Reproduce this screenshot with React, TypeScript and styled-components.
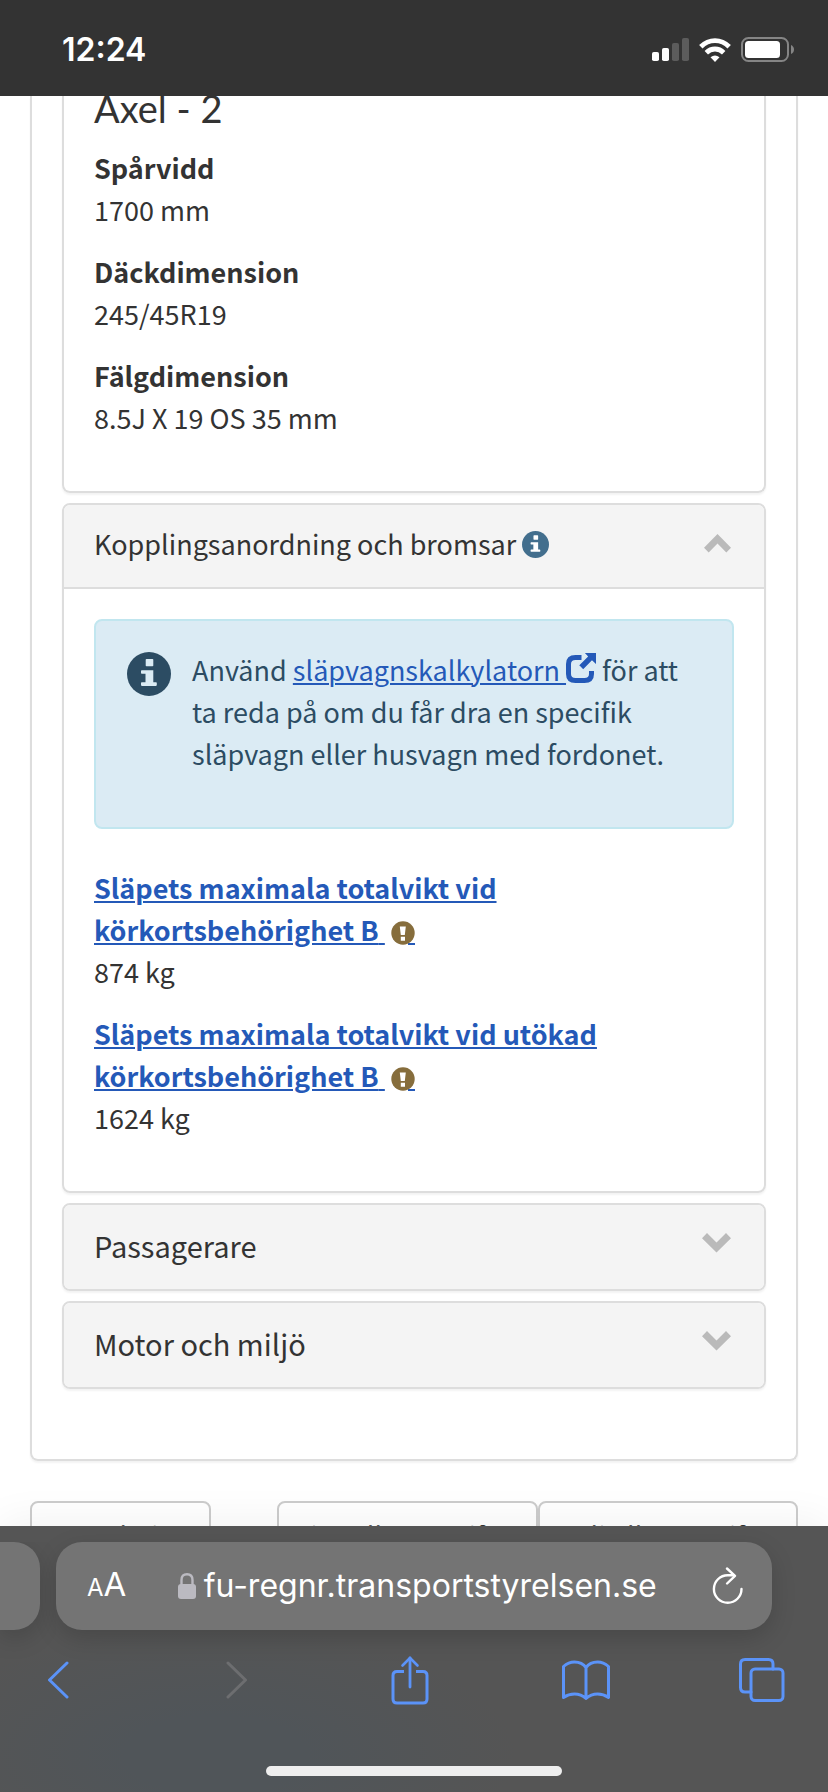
import React from "react";
import styled, { createGlobalStyle } from "styled-components";

const GlobalStyle = createGlobalStyle`
  * { box-sizing: border-box; }
  body { margin: 0; background: #fff; }
  button { font: inherit; color: inherit; background: none; border: 0; padding: 0; margin: 0; cursor: pointer; }
  h2, h3, p, dl, dt, dd { margin: 0; font-weight: inherit; font-size: inherit; }
  svg { display: block; flex: none; }
`;

const Screen = styled.div`
  display: grid;
  grid-template-rows: auto minmax(0, 1fr) auto;
  grid-template-columns: minmax(0, 1fr);
  height: 100vh;
  color: #333;
  font-family: "Noto Sans CJK SC", "Noto Sans", sans-serif;
  font-size: 27px;
  line-height: 42px;
`;

const StatusBar = styled.header`
  display: flex;
  align-items: center;
  justify-content: space-between;
  height: 96px;
  padding: 3px 34px 0 62px;
  background: #333;
  color: #fff;
  font-family: Inter, sans-serif;
`;

const Clock = styled.time`
  font-size: 32px;
  font-weight: 600;
`;

const StatusIcons = styled.div`
  display: flex;
  align-items: center;
  gap: 10px;
`;

const Page = styled.main`
  overflow: hidden;
  padding: 0 30px;
`;

const Sheet = styled.section`
  padding: 0 30px 60px;
  border: solid #ddd;
  border-width: 0 2px 2px;
  border-radius: 0 0 8px 8px;
  box-shadow: 0 2px 2px rgba(0, 0, 0, 0.05);
`;

const Panel = styled.section<{ $continued?: boolean }>`
  margin-bottom: 10px;
  border: 2px solid #ddd;
  border-top-width: ${(p) => (p.$continued ? 0 : 2)}px;
  border-radius: ${(p) => (p.$continued ? "0 0 8px 8px" : "8px")};
  box-shadow: 0 2px 2px rgba(0, 0, 0, 0.05);
  overflow: hidden;
`;

const PanelHeader = styled.button<{ $open?: boolean }>`
  && {
    display: flex;
    align-items: center;
    justify-content: space-between;
    width: 100%;
    height: ${(p) => (p.$open ? 82 : 84)}px;
    padding: 0 33px 0 30px;
    background: #f4f4f4;
    font-size: ${(p) => (p.$open ? 27 : 29)}px;
    text-align: left;
  }
`;

const PanelTitle = styled.span`
  display: flex;
  align-items: center;
  gap: 6px;
  padding-bottom: 4px;
`;

const PanelBody = styled.div<{ $ruled?: boolean }>`
  padding: ${(p) => (p.$ruled ? "30px 30px 52px" : "0 30px 52px")};
  border-top: ${(p) => (p.$ruled ? "2px solid #ddd" : "0")};
`;

const AxleHeading = styled.h2`
  && {
    margin-bottom: 27px;
    font-family: Lato, sans-serif;
    font-size: 38px;
    line-height: 24px;
  }
`;

const Facts = styled.dl`
  display: grid;
  gap: 20px;
`;

const Label = styled.dt`
  && { font-weight: 700; }
`;

const Value = styled.dd``;

const Link = styled.a`
  color: #2459b8;
  text-decoration: underline;
  text-decoration-thickness: 2px;
  text-underline-offset: 2px;
`;

const Notice = styled.aside`
  display: flex;
  gap: 21px;
  margin-bottom: 38px;
  padding: 28px 31px 52px;
  border: 2px solid #c1e6ef;
  border-radius: 8px;
  background: #dbebf4;
  color: #2c4c63;
`;

const NoticeIcon = styled.span`
  flex: none;
  margin-top: 3px;
`;

const ExternalMark = styled.span`
  display: inline-block;
  vertical-align: -2px;
`;

const WarningMark = styled.span`
  display: inline-block;
  margin-left: 6px;
  vertical-align: -4px;
`;

const Actions = styled.div`
  display: flex;
  margin-top: 40px;
`;

const ActionButton = styled.button<{ $grow?: boolean }>`
  && {
    flex: ${(p) => (p.$grow ? "1 1 0" : "0 0 181px")};
    min-width: 0;
    margin-right: ${(p) => (p.$grow ? 0 : 66)}px;
    padding: 12px 0;
    border: 2px solid #ccc;
    border-radius: 8px;
    white-space: nowrap;
  }
`;

const BrowserBar = styled.footer`
  position: relative;
  padding-top: 16px;
  background: radial-gradient(ellipse 300px 130px at 26% 86%, #505559 30%, #555 100%);
  color: #fff;
  font-family: Inter, sans-serif;
  box-shadow: 0 -4px 40px rgba(0, 0, 0, 0.06);
`;

const Tabs = styled.div`
  display: flex;
  gap: 16px;
  padding-right: 56px;
`;

const PreviousTab = styled.div`
  flex: 0 0 40px;
  border-radius: 0 26px 26px 0;
  background: #747474;
  box-shadow: 0 8px 24px rgba(0, 0, 0, 0.16);
  clip-path: inset(0 -16px -50px 0);
`;

const AddressBar = styled.div`
  display: flex;
  flex: 1;
  align-items: center;
  justify-content: space-between;
  height: 88px;
  padding: 0 29px 0 31px;
  border-radius: 26px;
  background: #747474;
  box-shadow: 0 8px 24px rgba(0, 0, 0, 0.16);
`;

const TextSize = styled.button`
  && { font-size: 33px; }
  small { font-size: 24px; }
`;

const Address = styled.div`
  display: flex;
  align-items: center;
  gap: 8px;
  padding-right: 4px;
  font-size: 32px;
`;

const Toolbar = styled.nav`
  display: flex;
  align-items: center;
  justify-content: space-between;
  height: 100px;
  padding: 0 42px 0 34px;
  color: #5b93f8;
`;

const ToolButton = styled.button<{ $muted?: boolean }>`
  && {
    display: flex;
    justify-content: center;
    width: 48px;
    color: ${(p) => (p.$muted ? "#6d6e70" : "inherit")};
  }
`;

const HomeIndicator = styled.div`
  width: 296px;
  height: 10px;
  margin: 36px auto 0;
  border-radius: 5px;
  background: #eee;
`;

const BarFoot = styled.div`
  height: 16px;
`;

const InfoIcon = ({ size, color, hole }: { size: number; color: string; hole: string }) => (
  <svg width={size} height={size} viewBox="0 0 44 44" aria-hidden="true">
    <circle cx="22" cy="22" r="22" fill={color} />
    <path fill={hole} d="M19.500 7h6q.8 0 .8.8v5.600q0 .8-.8.8h-6q-.8 0-.8-.8V7.800q0-.8.8-.8zM14.800 18.300h11.500v12h2.700q.8 0 .8.8v2q0 .8-.8.8H14.800q-.8 0-.8-.8v-2q0-.8.8-.8h3.700v-8.500h-3.700q-.8 0-.8-.8v-1.900q0-.8.8-.8z" />
  </svg>
);

const WarningIcon = () => (
  <svg width="24" height="24" viewBox="0 0 24 24" aria-label="Viktigt">
    <path fill="#2459b8" d="M17 22h7v2h-7z" />
    <circle cx="12" cy="12" r="11.700" fill="#866d3c" />
    <path fill="#fff" d="M8.800 5.500h6l-1 8.500h-4zM9.800 15.800h4.200v4H9.800z" />
  </svg>
);

const ExternalIcon = () => (
  <svg width="30" height="30" viewBox="0 0 30 30" aria-hidden="true">
    <path fill="none" stroke="#2459b8" strokeWidth="5" d="M15.500 4.500H9.500Q2.500 4.500 2.500 11v10q0 6.500 7 6.500h9q7 0 7-6.500v-3" />
    <path fill="#2459b8" stroke="#dbebf4" strokeWidth="1.500" d="M17 -1h14v14l-5-4.600-8.800 8.800-4.900-4.900L21.100 3.500z" />
  </svg>
);

const Chevron = ({ up = false }: { up?: boolean }) => (
  <svg width="29" height="30" viewBox="0 0 29 30" fill="#bababa" aria-hidden="true">
    {up ? (
      <path d="M15.500 3L29 16.700l-4.700 4.700-8.800-8.800-8.800 8.800L2 16.700z" />
    ) : (
      <path d="M14.500 20.500L0 6.200 5 1l9.500 9.400L24 1l5 5.200z" />
    )}
  </svg>
);

const SignalIcon = () => (
  <svg width="37" height="23" viewBox="0 0 37 23" fill="#fff" aria-label="Signal">
    <rect y="14" width="7" height="9" rx="1.800" />
    <rect x="10" y="10" width="7" height="13" rx="1.800" />
    <rect x="20" y="5" width="7" height="18" rx="1.800" fill="#5c5c5c" />
    <rect x="30" width="7" height="23" rx="1.800" fill="#5c5c5c" />
  </svg>
);

const WifiIcon = () => (
  <svg width="32" height="24" viewBox="0 0 32 24" fill="none" stroke="#fff" aria-label="Wi-Fi">
    <path strokeWidth="4.800" d="M1.800 8.800Q8 2.600 16 2.600t14.200 6.200" />
    <path strokeWidth="4.800" d="M7.300 14.700q3.700-3.700 8.700-3.700t8.700 3.700" />
    <path fill="#fff" stroke="none" d="M11.500 19.300q4.500-3.600 9 0L16 24z" />
  </svg>
);

const BatteryIcon = () => (
  <svg width="53" height="25" viewBox="0 0 53 25" aria-label="Batteri">
    <rect x="1" y="1" width="46" height="23" rx="6.500" fill="none" stroke="#858585" strokeWidth="2" />
    <rect x="4" y="4" width="35" height="17" rx="3.500" fill="#fff" />
    <path fill="#858585" d="M50 8q3 1.500 3 4.500T50 17z" />
  </svg>
);

const LockIcon = () => (
  <svg width="18" height="26" viewBox="0 0 18 26" aria-hidden="true">
    <path fill="none" stroke="#bbbac1" strokeWidth="2.400" d="M3.500 12V7Q3.500 1.200 9 1.200T14.500 7v5" />
    <rect y="11" width="18" height="15" rx="3" fill="#bbbac1" />
  </svg>
);

const ReloadIcon = () => (
  <svg width="31" height="38" viewBox="0 0 31 38" fill="none" stroke="#fff" strokeWidth="2.400" strokeLinecap="round" strokeLinejoin="round" aria-hidden="true">
    <path d="M29.500 22A13.800 13.800 0 1 1 15.700 8.200H22" />
    <path d="M15 1.500L23 8.800l-7.900 7.700" />
  </svg>
);

const tool = { fill: "none", stroke: "currentColor", strokeWidth: 3, strokeLinecap: "round", strokeLinejoin: "round" } as const;

const BackIcon = () => (
  <svg width="22" height="38" viewBox="0 0 22 38" {...tool}><path d="M20 2L2.500 19 20 36" /></svg>
);
const ForwardIcon = () => (
  <svg width="28" height="38" viewBox="-6 0 28 38" {...tool}><path d="M2 2l17.500 17L2 36" /></svg>
);
const ShareIcon = () => (
  <svg width="38" height="50" viewBox="0 0 38 50" {...tool}>
    <path strokeLinecap="butt" d="M13 16.500H6q-4 0-4 4v23.500q0 4 4 4h26q4 0 4-4V20.500q0-4-4-4h-7" />
    <path d="M19 32V3" strokeWidth="2.800" />
    <path d="M11.500 10.500L19 3l7.500 7.500" strokeWidth="2.600" />
  </svg>
);
const BookIcon = () => (
  <svg width="48" height="40" viewBox="0 0 48 40" {...tool}>
    <path d="M24 7.500Q20 2 12.500 2 6.500 2 1.500 6.500V37.500Q6.500 34 12.500 34 19 34 24 38.500 29 34 35.500 34q6 0 11 3.500V6.500Q41.500 2 35.500 2 28 2 24 7.500zV38" />
  </svg>
);
const TabsIcon = () => (
  <svg width="46" height="44" viewBox="0 0 46 44" {...tool}>
    <rect x="12" y="11" width="32" height="31.500" rx="4" />
    <path d="M34 11V6q0-4.500-4.500-4.500H6Q1.500 1.500 1.500 6v23.500Q1.500 34 6 34h6" />
  </svg>
);

const axleFacts = [
  ["Spårvidd", "1700 mm"],
  ["Däckdimension", "245/45R19"],
  ["Fälgdimension", "8.5J X 19 OS 35 mm"],
];

const trailerFacts = [
  ["Släpets maximala totalvikt vid körkortsbehörighet B", "874 kg"],
  ["Släpets maximala totalvikt vid utökad körkortsbehörighet B", "1624 kg"],
];

export default function App() {
  return (
    <Screen>
      <GlobalStyle />
      <StatusBar>
        <Clock>12:24</Clock>
        <StatusIcons>
          <SignalIcon />
          <WifiIcon />
          <BatteryIcon />
        </StatusIcons>
      </StatusBar>

      <Page>
        <Sheet>
          <Panel $continued>
            <PanelBody>
              <AxleHeading>Axel - 2</AxleHeading>
              <Facts>
                {axleFacts.map(([label, value]) => (
                  <div key={label}>
                    <Label>{label}</Label>
                    <Value>{value}</Value>
                  </div>
                ))}
              </Facts>
            </PanelBody>
          </Panel>

          <Panel>
            <PanelHeader $open aria-expanded="true">
              <PanelTitle>
                Kopplingsanordning och bromsar
                <InfoIcon size={27} color="#426e8d" hole="#fff" />
              </PanelTitle>
              <Chevron up />
            </PanelHeader>
            <PanelBody $ruled>
              <Notice>
                <NoticeIcon>
                  <InfoIcon size={44} color="#2c4c63" hole="#dbebf4" />
                </NoticeIcon>
                <p>
                  Använd{" "}
                  <Link href="#kalkylator">
                    släpvagnskalkylatorn <ExternalMark><ExternalIcon /></ExternalMark>
                  </Link>{" "}
                  för att ta reda på om du får dra en specifik släpvagn eller husvagn med fordonet.
                </p>
              </Notice>
              <Facts>
                {trailerFacts.map(([label, value]) => (
                  <div key={label}>
                    <Label>
                      <Link href="#totalvikt">
                        {label} <WarningMark><WarningIcon /></WarningMark>
                      </Link>
                    </Label>
                    <Value>{value}</Value>
                  </div>
                ))}
              </Facts>
            </PanelBody>
          </Panel>

          {["Passagerare", "Motor och miljö"].map((title) => (
            <Panel key={title}>
              <PanelHeader aria-expanded="false">
                <PanelTitle>{title}</PanelTitle>
                <Chevron />
              </PanelHeader>
            </Panel>
          ))}
        </Sheet>

        <Actions>
          <ActionButton>Ny sökning</ActionButton>
          <ActionButton $grow>Visa alla uppgifter</ActionButton>
          <ActionButton $grow>Dölj alla uppgifter</ActionButton>
        </Actions>
      </Page>

      <BrowserBar>
        <Tabs>
          <PreviousTab />
          <AddressBar>
            <TextSize aria-label="Textstorlek"><small>A</small>A</TextSize>
            <Address>
              <LockIcon />
              fu-regnr.transportstyrelsen.se
            </Address>
            <button aria-label="Ladda om"><ReloadIcon /></button>
          </AddressBar>
        </Tabs>
        <Toolbar aria-label="Webbläsare">
          <ToolButton aria-label="Bakåt"><BackIcon /></ToolButton>
          <ToolButton $muted aria-label="Framåt"><ForwardIcon /></ToolButton>
          <ToolButton aria-label="Dela"><ShareIcon /></ToolButton>
          <ToolButton aria-label="Bokmärken"><BookIcon /></ToolButton>
          <ToolButton aria-label="Flikar"><TabsIcon /></ToolButton>
        </Toolbar>
        <HomeIndicator />
        <BarFoot />
      </BrowserBar>
    </Screen>
  );
}
